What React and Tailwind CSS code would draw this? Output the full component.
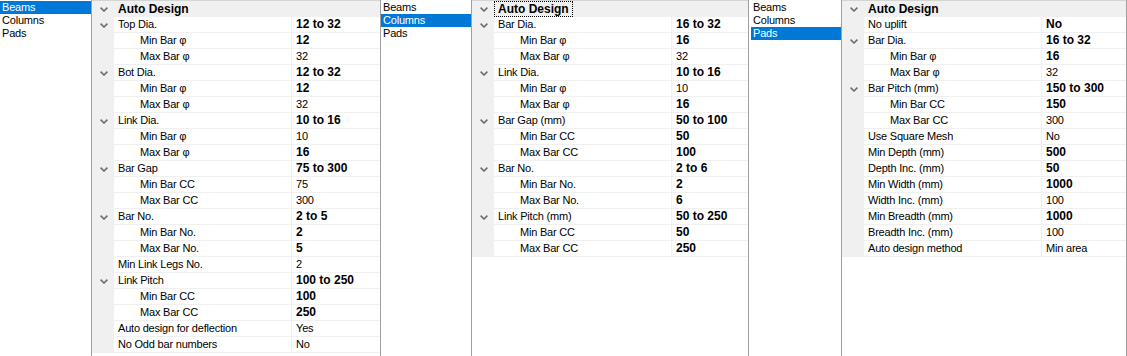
import React from "react";

const Chevron = () => (
  <svg width="8" height="5" viewBox="0 0 8 5" className="block">
    <path d="M0.6 0.6 L4 4 L7.4 0.6" fill="none" stroke="#6a6a6a" strokeWidth="1.5" />
  </svg>
);

const beams = [
  { h: true, n: "Auto Design", c: true },
  { n: "Top Dia.", v: "12 to 32", b: true, c: true },
  { n: "Min Bar φ", v: "12", b: true, i: true },
  { n: "Max Bar φ", v: "32", i: true },
  { n: "Bot Dia.", v: "12 to 32", b: true, c: true },
  { n: "Min Bar φ", v: "12", b: true, i: true },
  { n: "Max Bar φ", v: "32", i: true },
  { n: "Link Dia.", v: "10 to 16", b: true, c: true },
  { n: "Min Bar φ", v: "10", i: true },
  { n: "Max Bar φ", v: "16", b: true, i: true },
  { n: "Bar Gap", v: "75 to 300", b: true, c: true },
  { n: "Min Bar CC", v: "75", i: true },
  { n: "Max Bar CC", v: "300", i: true },
  { n: "Bar No.", v: "2 to 5", b: true, c: true },
  { n: "Min Bar No.", v: "2", b: true, i: true },
  { n: "Max Bar No.", v: "5", b: true, i: true },
  { n: "Min Link Legs No.", v: "2" },
  { n: "Link Pitch", v: "100 to 250", b: true, c: true },
  { n: "Min Bar CC", v: "100", b: true, i: true },
  { n: "Max Bar CC", v: "250", b: true, i: true },
  { n: "Auto design for deflection", v: "Yes" },
  { n: "No Odd bar numbers", v: "No" },
];

const columns = [
  { h: true, n: "Auto Design", c: true, f: true },
  { n: "Bar Dia.", v: "16 to 32", b: true, c: true },
  { n: "Min Bar φ", v: "16", b: true, i: true },
  { n: "Max Bar φ", v: "32", i: true },
  { n: "Link Dia.", v: "10 to 16", b: true, c: true },
  { n: "Min Bar φ", v: "10", i: true },
  { n: "Max Bar φ", v: "16", b: true, i: true },
  { n: "Bar Gap (mm)", v: "50 to 100", b: true, c: true },
  { n: "Min Bar CC", v: "50", b: true, i: true },
  { n: "Max Bar CC", v: "100", b: true, i: true },
  { n: "Bar No.", v: "2 to 6", b: true, c: true },
  { n: "Min Bar No.", v: "2", b: true, i: true },
  { n: "Max Bar No.", v: "6", b: true, i: true },
  { n: "Link Pitch (mm)", v: "50 to 250", b: true, c: true },
  { n: "Min Bar CC", v: "50", b: true, i: true },
  { n: "Max Bar CC", v: "250", b: true, i: true },
];

const pads = [
  { h: true, n: "Auto Design", c: true },
  { n: "No uplift", v: "No", b: true },
  { n: "Bar Dia.", v: "16 to 32", b: true, c: true },
  { n: "Min Bar φ", v: "16", b: true, i: true },
  { n: "Max Bar φ", v: "32", i: true },
  { n: "Bar Pitch (mm)", v: "150 to 300", b: true, c: true },
  { n: "Min Bar CC", v: "150", b: true, i: true },
  { n: "Max Bar CC", v: "300", i: true },
  { n: "Use Square Mesh", v: "No" },
  { n: "Min Depth (mm)", v: "500", b: true },
  { n: "Depth Inc. (mm)", v: "50", b: true },
  { n: "Min Width (mm)", v: "1000", b: true },
  { n: "Width Inc. (mm)", v: "100" },
  { n: "Min Breadth (mm)", v: "1000", b: true },
  { n: "Breadth Inc. (mm)", v: "100" },
  { n: "Auto design method", v: "Min area" },
];

const Row = ({ r }) => (
  <div className="flex h-[16px]">
    <div className="w-[22px] shrink-0 bg-[#f0f0f0] flex items-center pl-[8px]">
      {r.c && <Chevron />}
    </div>
    {r.h ? (
      <div className="flex-1 bg-[#f0f0f0] flex items-center">
        <span
          className={
            "text-[12px] font-bold leading-[14px] px-[3px] " +
            (r.f ? "border border-dotted border-black" : "border border-transparent")
          }
        >
          {r.n}
        </span>
      </div>
    ) : (
      <>
        <div
          className={
            "w-[177px] shrink-0 border-b border-[#f0f0f0] text-[11px] tracking-[-0.2px] leading-[15px] whitespace-nowrap " +
            (r.i ? "pl-[26px]" : "pl-[4px]")
          }
        >
          {r.n}
        </div>
        <div className="w-px shrink-0 bg-[#f0f0f0]" />
        <div
          className={
            "flex-1 border-b border-[#f0f0f0] pl-[4px] whitespace-nowrap leading-[15px] " +
            (r.b ? "text-[12px] font-bold" : "text-[11px] tracking-[-0.2px]")
          }
        >
          {r.v}
        </div>
      </>
    )}
  </div>
);

const List = ({ sel, w, pad }) => (
  <div className={"shrink-0 pt-[1px] " + w + " " + pad}>
    {["Beams", "Columns", "Pads"].map((t) => (
      <div
        key={t}
        className={
          "h-[13px] leading-[13px] text-[11px] tracking-[-0.2px] pl-[2px] " +
          (t === sel ? "bg-[#0078d7] text-white" : "text-black")
        }
      >
        {t}
      </div>
    ))}
  </div>
);

const Grid = ({ rows, w }) => (
  <div className={"shrink-0 h-[356px] border-l border-r border-[#a0a0a0] bg-white " + w}>
    <div className="h-px bg-[#d4d4d4]" />
    {rows.map((r, k) => (
      <Row key={k} r={r} />
    ))}
  </div>
);

export default function App() {
  return (
    <div className="flex w-[1127px] h-[356px] bg-white text-black font-['Liberation_Sans',Arial,sans-serif] overflow-hidden">
      <List sel="Beams" w="w-[91px]" pad="" />
      <Grid rows={beams} w="w-[290px]" />
      <List sel="Columns" w="w-[90px]" pad="" />
      <Grid rows={columns} w="w-[278px]" />
      <List sel="Pads" w="w-[92px]" pad="pl-[2px]" />
      <Grid rows={pads} w="w-[286px]" />
    </div>
  );
}
